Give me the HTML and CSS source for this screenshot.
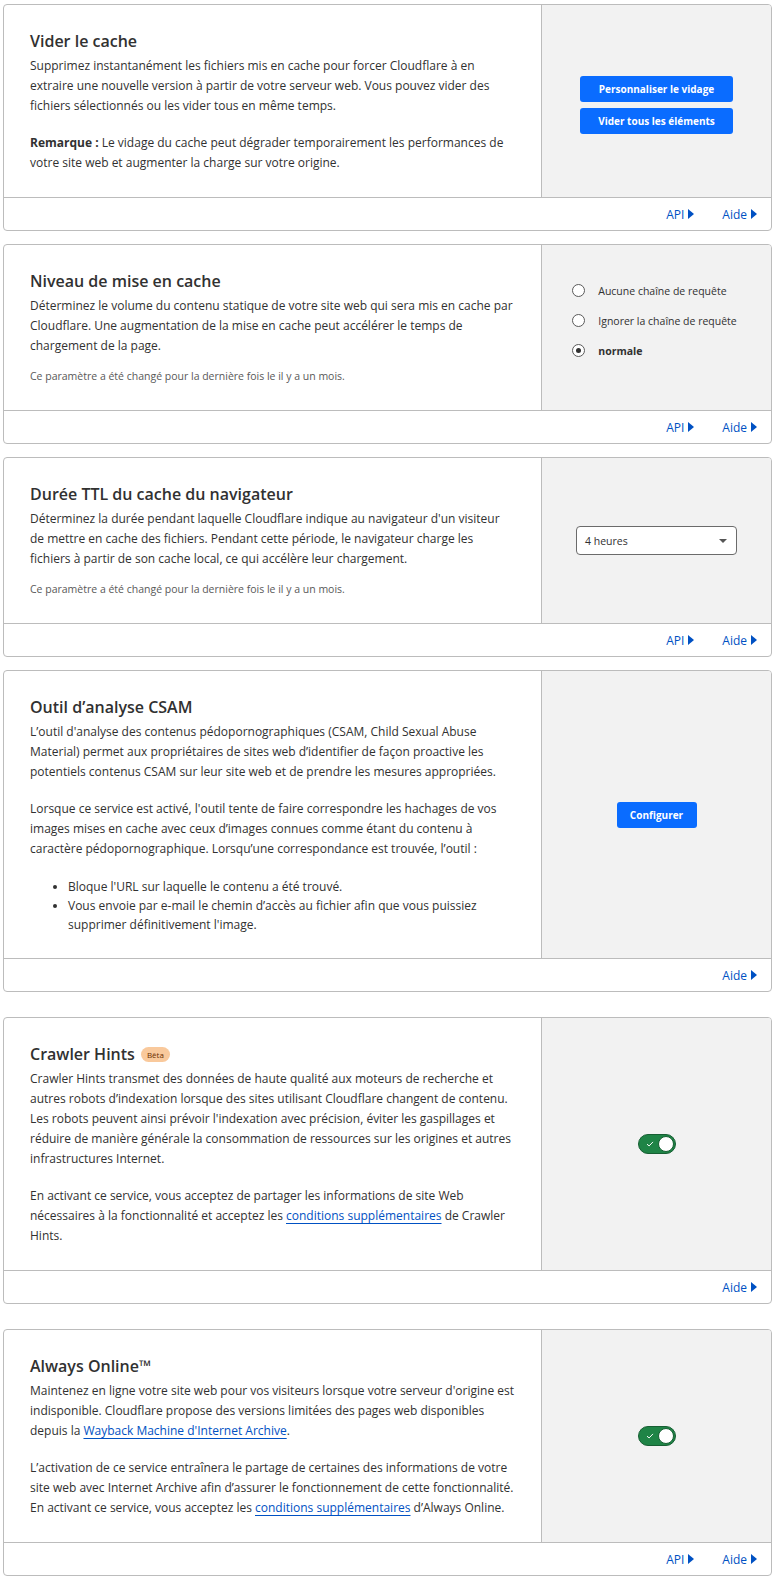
FILE: index.html
```html
<!DOCTYPE html>
<html>
<head>
  <link rel="stylesheet" href="styles.css">
</head>
<body>
  <div class="card">
    <div class="card-main">
      <div class="card-body">
        <h2>Vider le cache</h2>
        <p>Supprimez instantanément les fichiers mis en cache pour forcer Cloudflare à en extraire une nouvelle version à partir de votre serveur web. Vous pouvez vider des fichiers sélectionnés ou les vider tous en même temps.</p>
        <p><strong>Remarque :</strong> Le vidage du cache peut dégrader temporairement les performances de votre site web et augmenter la charge sur votre origine.</p>
      </div>
      <div class="card-control">
        <div class="btn-stack">
          <button class="btn">Personnaliser le vidage</button>
          <button class="btn">Vider tous les éléments</button>
        </div>
      </div>
    </div>
    <div class="card-footer">
      <a href="#" class="more">API</a>
      <a href="#" class="more">Aide</a>
    </div>
  </div>

  <div class="card">
    <div class="card-main">
      <div class="card-body">
        <h2>Niveau de mise en cache</h2>
        <p>Déterminez le volume du contenu statique de votre site web qui sera mis en cache par Cloudflare. Une augmentation de la mise en cache peut accélérer le temps de chargement de la page.</p>
        <p class="changed">Ce paramètre a été changé pour la dernière fois le il y a un mois.</p>
      </div>
      <div class="card-control">
        <div class="radios">
          <label class="radio"><span class="dot"></span>Aucune chaîne de requête</label>
          <label class="radio"><span class="dot"></span>Ignorer la chaîne de requête</label>
          <label class="radio checked"><span class="dot"></span>normale</label>
        </div>
      </div>
    </div>
    <div class="card-footer">
      <a href="#" class="more">API</a>
      <a href="#" class="more">Aide</a>
    </div>
  </div>

  <div class="card">
    <div class="card-main">
      <div class="card-body">
        <h2>Durée TTL du cache du navigateur</h2>
        <p>Déterminez la durée pendant laquelle Cloudflare indique au navigateur d'un visiteur de mettre en cache des fichiers. Pendant cette période, le navigateur charge les fichiers à partir de son cache local, ce qui accélère leur chargement.</p>
        <p class="changed">Ce paramètre a été changé pour la dernière fois le il y a un mois.</p>
      </div>
      <div class="card-control">
        <div class="select">4 heures<span class="caret"></span></div>
      </div>
    </div>
    <div class="card-footer">
      <a href="#" class="more">API</a>
      <a href="#" class="more">Aide</a>
    </div>
  </div>

  <div class="card">
    <div class="card-main">
      <div class="card-body">
        <h2>Outil d’analyse CSAM</h2>
        <p>L’outil d'analyse des contenus pédopornographiques (CSAM, Child Sexual Abuse Material) permet aux propriétaires de sites web d’identifier de façon proactive les potentiels contenus CSAM sur leur site web et de prendre les mesures appropriées.</p>
        <p>Lorsque ce service est activé, l'outil tente de faire correspondre les hachages de vos images mises en cache avec ceux d’images connues comme étant du contenu à caractère pédopornographique. Lorsqu’une correspondance est trouvée, l’outil :</p>
        <ul>
          <li>Bloque l'URL sur laquelle le contenu a été trouvé.</li>
          <li>Vous envoie par e-mail le chemin d’accès au fichier afin que vous puissiez supprimer définitivement l'image.</li>
        </ul>
      </div>
      <div class="card-control">
        <button class="btn">Configurer</button>
      </div>
    </div>
    <div class="card-footer">
      <a href="#" class="more">Aide</a>
    </div>
  </div>

  <div class="card card-spaced">
    <div class="card-main">
      <div class="card-body">
        <h2>Crawler Hints <span class="badge">Bêta</span></h2>
        <p>Crawler Hints transmet des données de haute qualité aux moteurs de recherche et autres robots d’indexation lorsque des sites utilisant Cloudflare changent de contenu. Les robots peuvent ainsi prévoir l'indexation avec précision, éviter les gaspillages et réduire de manière générale la consommation de ressources sur les origines et autres infrastructures Internet.</p>
        <p>En activant ce service, vous acceptez de partager les informations de site Web nécessaires à la fonctionnalité et acceptez les <a href="#">conditions supplémentaires</a> de Crawler Hints.</p>
      </div>
      <div class="card-control">
        <span class="toggle">
          <svg class="check" viewBox="0 0 10 8" width="8" height="6"><path d="M1 4.2 L3.8 6.6 L9 1.2" fill="none" stroke="#fff" stroke-width="1.3"/></svg>
          <span class="knob"></span>
        </span>
      </div>
    </div>
    <div class="card-footer">
      <a href="#" class="more">Aide</a>
    </div>
  </div>

  <div class="card card-spaced">
    <div class="card-main">
      <div class="card-body">
        <h2>Always Online™</h2>
        <p>Maintenez en ligne votre site web pour vos visiteurs lorsque votre serveur d'origine est indisponible. Cloudflare propose des versions limitées des pages web disponibles depuis la <a href="#">Wayback Machine d'Internet Archive</a>.</p>
        <p>L’activation de ce service entraînera le partage de certaines des informations de votre site web avec Internet Archive afin d’assurer le fonctionnement de cette fonctionnalité. En activant ce service, vous acceptez les <a href="#">conditions supplémentaires</a> d’Always Online.</p>
      </div>
      <div class="card-control">
        <span class="toggle">
          <svg class="check" viewBox="0 0 10 8" width="8" height="6"><path d="M1 4.2 L3.8 6.6 L9 1.2" fill="none" stroke="#fff" stroke-width="1.3"/></svg>
          <span class="knob"></span>
        </span>
      </div>
    </div>
    <div class="card-footer">
      <a href="#" class="more">API</a>
      <a href="#" class="more">Aide</a>
    </div>
  </div>
</body>
</html>
```

FILE: styles.css
```css
body {
  margin: 0;
  padding: 4px 6px 6px 3px;
  font-family: 'Open Sans', 'Noto Sans', sans-serif;
  font-size: 12px;
  color: #313131;
  background: #ffffff;
}
.card {
  border: 1px solid #bcbcbc;
  border-radius: 4px;
  margin-bottom: 13px;
  overflow: hidden;
}
.card-spaced {
  margin-top: 25px;
}
.card-main {
  display: flex;
}
.card-body {
  flex: 1;
  padding: 24px 25px 24px 26px;
}
.card-body h2 {
  margin: 0 0 3px;
  font-size: 16px;
  line-height: 24px;
  font-weight: 600;
  color: #313131;
  display: flex;
  align-items: center;
  gap: 6px;
}
.card-body p {
  margin: 0;
  line-height: 20px;
}
.card-body p + p {
  margin-top: 17px;
}
.card-body strong {
  font-weight: 700;
}
.card-body a {
  color: #0051c3;
  text-decoration: underline;
  text-underline-offset: 3px;
}
.card-body p.changed {
  font-size: 10.5px;
  line-height: 16px;
  color: #595959;
  margin-top: 12px;
  margin-bottom: 2px;
}
.card-body ul {
  margin: 18px 0 0;
  padding-left: 38px;
}
.card-body li {
  line-height: 19px;
}
.card-control {
  width: 229px;
  background: #f2f2f2;
  border-left: 1px solid #bcbcbc;
  display: flex;
  align-items: center;
  justify-content: center;
}
.card-footer {
  border-top: 1px solid #bcbcbc;
  height: 32px;
  display: flex;
  align-items: center;
  justify-content: flex-end;
  gap: 28px;
  padding-right: 14px;
}
.more {
  color: #0051c3;
  text-decoration: none;
  font-size: 12px;
  display: flex;
  align-items: center;
}
.more::after {
  content: "";
  margin-left: 4px;
  border-left: 6px solid #0051c3;
  border-top: 5px solid transparent;
  border-bottom: 5px solid transparent;
}
.btn-stack {
  display: flex;
  flex-direction: column;
  gap: 6px;
  margin-top: 8px;
}
.btn {
  font-family: inherit;
  font-size: 10px;
  font-weight: 700;
  color: #ffffff;
  background: #0a6cff;
  border: none;
  border-radius: 3px;
  height: 26px;
  padding: 0 12px;
  min-width: 80px;
}
.btn-stack .btn {
  width: 153px;
}
.radios {
  display: flex;
  flex-direction: column;
  gap: 10px;
  margin-bottom: 14px;
  margin-left: -4px;
}
.radio {
  display: flex;
  align-items: center;
  font-size: 10.5px;
  color: #313131;
  height: 20px;
}
.radio .dot {
  width: 11px;
  height: 11px;
  border: 1px solid #5a5a5a;
  border-radius: 50%;
  background: #ffffff;
  margin-right: 13px;
  display: flex;
  align-items: center;
  justify-content: center;
}
.radio.checked {
  font-weight: 700;
}
.radio.checked .dot::after {
  content: "";
  width: 5px;
  height: 5px;
  border-radius: 50%;
  background: #313131;
}
.select {
  width: 142px;
  height: 27px;
  border: 1px solid #6b6b6b;
  border-radius: 4px;
  background: #ffffff;
  font-size: 10.5px;
  display: flex;
  align-items: center;
  justify-content: space-between;
  padding: 0 9px 0 8px;
}
.caret {
  border-top: 4px solid #555555;
  border-left: 4px solid transparent;
  border-right: 4px solid transparent;
}
.toggle {
  box-sizing: border-box;
  width: 38px;
  height: 20px;
  border: 1px solid #175f33;
  border-radius: 10px;
  background: #1f8446;
  display: flex;
  align-items: center;
  justify-content: space-between;
  padding: 0 1px 0 7px;
}
.toggle .knob {
  box-sizing: border-box;
  width: 16px;
  height: 16px;
  border-radius: 50%;
  background: #ffffff;
  border: 1px solid #175f33;
}
.badge {
  font-size: 8px;
  font-weight: 400;
  background: #f9c99c;
  color: #6b2f00;
  border-radius: 8px;
  padding: 1px 6px;
  line-height: 13px;
}
```
